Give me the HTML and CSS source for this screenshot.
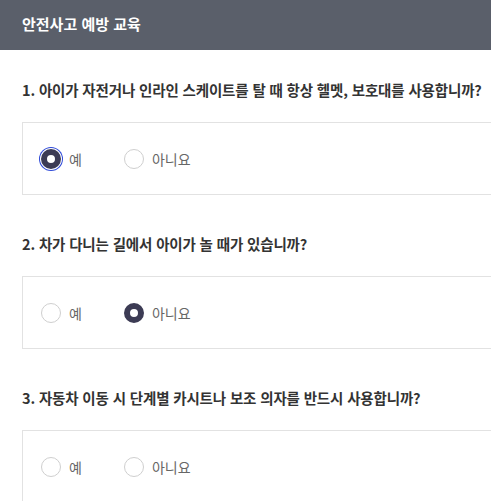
FILE: index.html
```html
<!DOCTYPE html>
<html lang="ko">
<head>
<meta charset="utf-8">
<title>안전사고 예방 교육</title>
<link rel="stylesheet" href="styles.css">
</head>
<body>
<header class="header">안전사고 예방 교육</header>
<main class="content">
  <section class="item">
    <h2 class="question">1. 아이가 자전거나 인라인 스케이트를 탈 때 항상 헬멧, 보호대를 사용합니까?</h2>
    <div class="options">
      <label class="option"><span class="radio checked focused"></span><span class="label">예</span></label>
      <label class="option"><span class="radio"></span><span class="label">아니요</span></label>
    </div>
  </section>
  <section class="item">
    <h2 class="question">2. 차가 다니는 길에서 아이가 놀 때가 있습니까?</h2>
    <div class="options">
      <label class="option"><span class="radio"></span><span class="label">예</span></label>
      <label class="option"><span class="radio checked"></span><span class="label">아니요</span></label>
    </div>
  </section>
  <section class="item">
    <h2 class="question">3. 자동차 이동 시 단계별 카시트나 보조 의자를 반드시 사용합니까?</h2>
    <div class="options">
      <label class="option"><span class="radio"></span><span class="label">예</span></label>
      <label class="option"><span class="radio"></span><span class="label">아니요</span></label>
    </div>
  </section>
</main>
</body>
</html>
```
FILE: styles.css
```css
html, body {
  margin: 0;
  padding: 0;
  background: #ffffff;
  overflow: hidden;
}
body {
  font-family: "Noto Sans CJK KR", "Noto Sans", sans-serif;
  color: #333333;
}
.header {
  height: 50px;
  line-height: 48px;
  background: #5a5f6a;
  color: #ffffff;
  font-size: 15px;
  font-weight: 700;
  padding-left: 22px;
}
.content {
  padding-left: 22px;
}
.item {
  margin-top: 30px;
}
.item + .item {
  margin-top: 39px;
}
.question {
  margin: 0;
  font-size: 14.5px;
  line-height: 20px;
  font-weight: 700;
  color: #333333;
  letter-spacing: -0.15px;
  white-space: nowrap;
}
.options {
  margin-top: 22px;
  margin-right: -40px;
  border: 1px solid #e2e2e2;
  padding: 25px 0 24px 18px;
  display: flex;
  gap: 42px;
}
.option {
  display: flex;
  align-items: center;
  height: 22px;
  gap: 8px;
  font-size: 14px;
  color: #666666;
}
.radio {
  width: 18px;
  height: 18px;
  border-radius: 50%;
  border: 1px solid #cfcfcf;
  background: #ffffff;
  box-sizing: content-box;
}
.radio.checked {
  border: 6px solid #3c3b54;
  width: 8px;
  height: 8px;
}
.radio.focused {
  box-shadow: 0 0 0 1px #ffffff, 0 0 0 2px #2f4ad8;
}
.label {
  line-height: 22px;
}
```
